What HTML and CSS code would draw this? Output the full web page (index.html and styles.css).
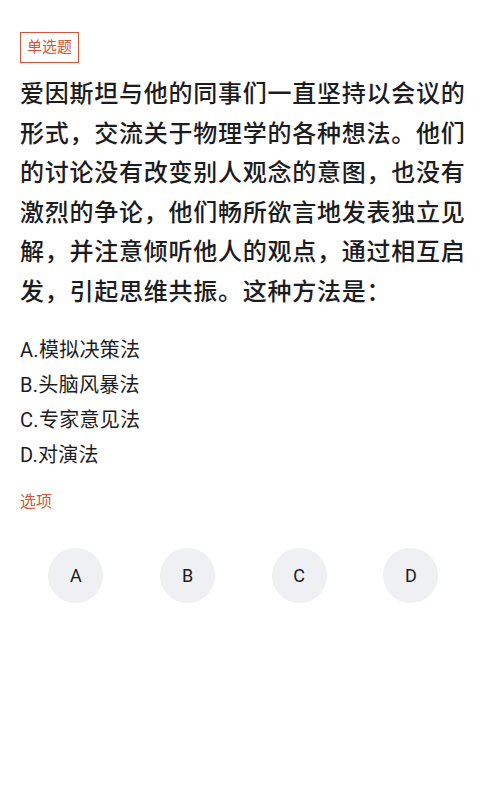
FILE: index.html
```html
<!DOCTYPE html>
<html lang="zh-CN">
<head>
<meta charset="UTF-8" />
<meta name="viewport" content="width=device-width, initial-scale=1" />
<title>单选题</title>
<link rel="stylesheet" href="styles.css">
</head>
<body>
  <div class="question">
    <span class="tag">单选题</span>
    <p class="stem">爱因斯坦与他的同事们一直坚持以会议的形式，交流关于物理学的各种想法。他们的讨论没有改变别人观念的意图，也没有激烈的争论，他们畅所欲言地发表独立见解，并注意倾听他人的观点，通过相互启发，引起思维共振。这种方法是：</p>

    <ul class="options">
      <li>A.模拟决策法</li>
      <li>B.头脑风暴法</li>
      <li>C.专家意见法</li>
      <li>D.对演法</li>
    </ul>

    <div class="section-title">选项</div>

    <div class="answers">
      <button class="answer">A</button>
      <button class="answer">B</button>
      <button class="answer">C</button>
      <button class="answer">D</button>
    </div>
  </div>
</body>
</html>
```

FILE: styles.css
```css
* {
  box-sizing: border-box;
}
body {
  margin: 0;
  background: #ffffff;
  font-family: Roboto, "Noto Sans CJK SC", sans-serif;
  color: #1c1c1e;
}

.question {
  padding: 32px 10px 0 20px;
}

/* Type tag */
.tag {
  display: inline-block;
  height: 31px;
  line-height: 29px;
  padding: 0 6px;
  border: 1px solid #d4553a;
  color: #d4553a;
  font-size: 15px;
}

.stem {
  margin: 12px 0 0 0;
  font-size: 24px;
  letter-spacing: 0.75px;
  line-height: 39.6px;
  font-weight: 500;
}

/* Option list */
.options {
  list-style: none;
  margin: 20px 0 0 0;
  padding: 0;
}
.options li {
  font-size: 20px;
  letter-spacing: 0.3px;
  line-height: 35px;
}

.section-title {
  margin-top: 17px;
  font-size: 16px;
  line-height: 24px;
  color: #d4553a;
}

/* Answer buttons */
.answers {
  display: grid;
  grid-template-columns: repeat(4, 111.7px);
  justify-items: center;
  margin-top: 34px;
}
.answer {
  width: 55px;
  height: 55px;
  border: none;
  border-radius: 50%;
  background: #eef0f3;
  color: #1c1c1e;
  font-family: Roboto, sans-serif;
  font-size: 18px;
  padding: 0;
  cursor: pointer;
}
```
